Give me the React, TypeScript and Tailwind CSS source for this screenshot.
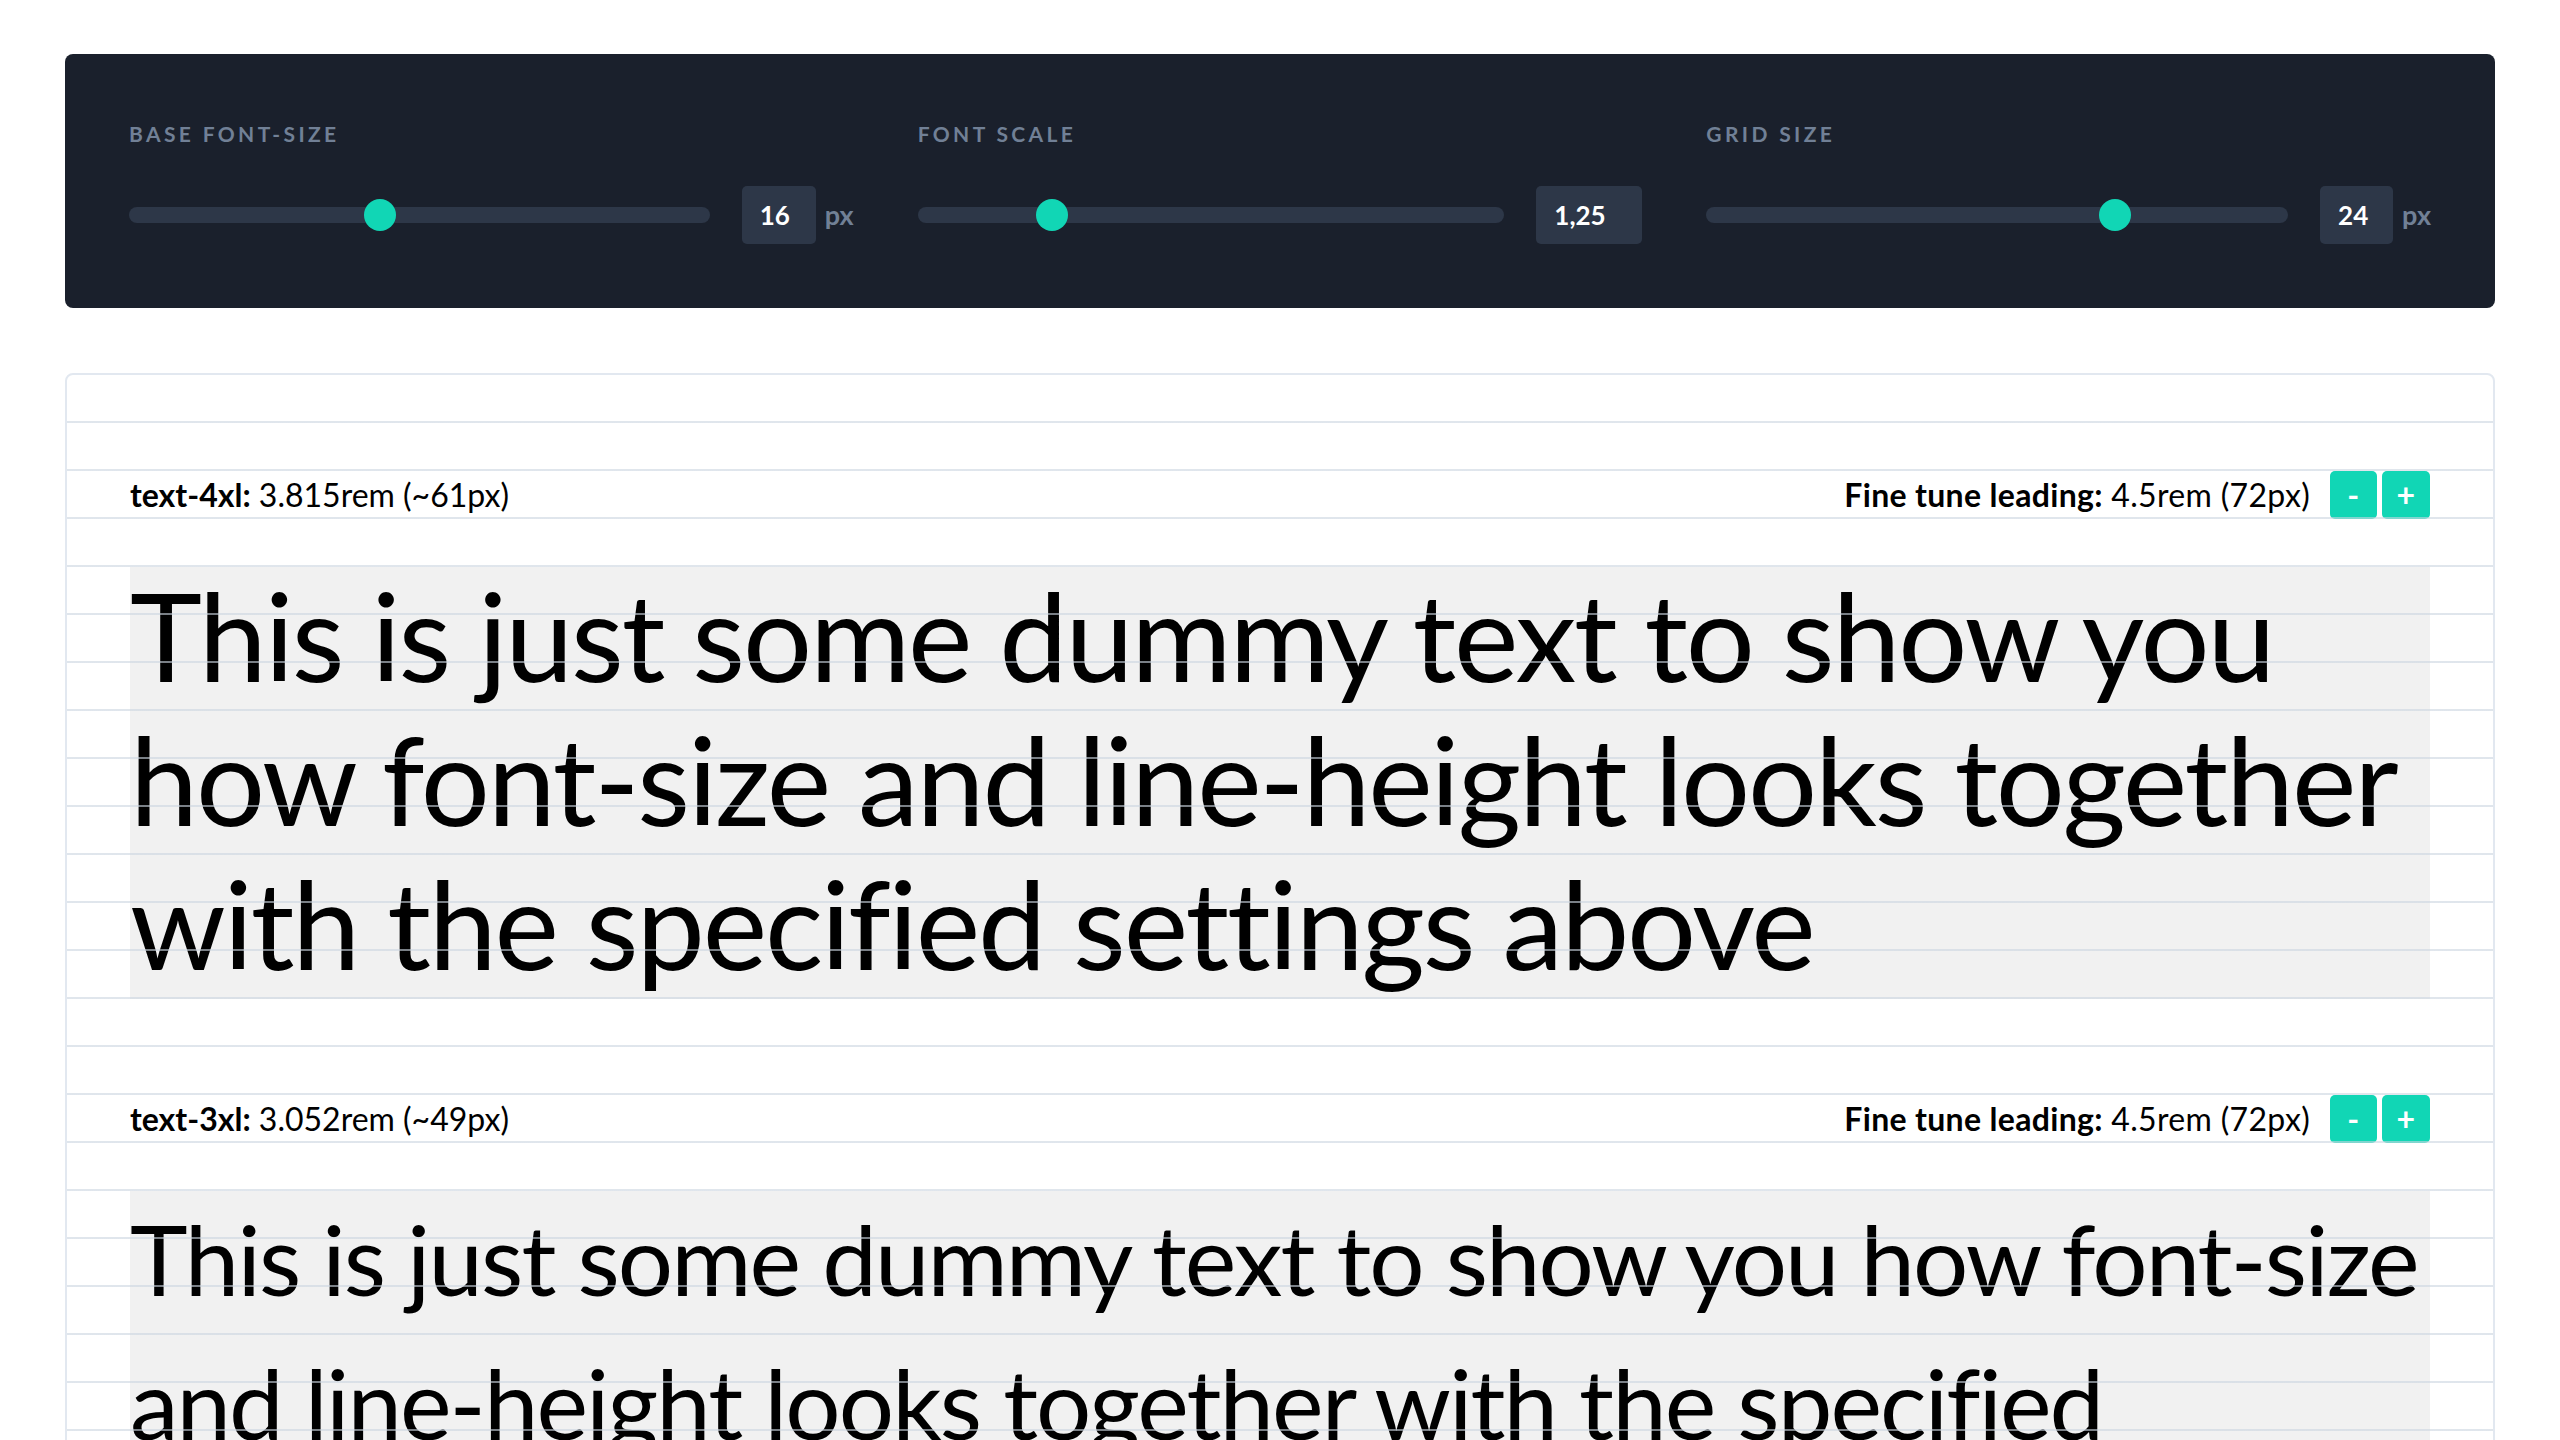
import React from "react";

const controls = [
  { label: "BASE FONT-SIZE", value: "16", unit: "px", pct: 0.428, boxW: "w-[74px]" },
  { label: "FONT SCALE", value: "1,25", unit: null, pct: 0.213, boxW: "w-[106px]" },
  { label: "GRID SIZE", value: "24", unit: "px", pct: 0.715, boxW: "w-[73px]" },
];

const TEXT =
  "This is just some dummy text to show you how font-size and line-height looks together with the specified settings above";

function Control({ c }: { c: (typeof controls)[number] }) {
  return (
    <div className="flex flex-col">
      <div className="text-[21px] leading-[32px] font-bold tracking-[0.16em] text-[#718096]">{c.label}</div>
      <div className="mt-[36px] flex items-center">
        <div className="relative h-4 flex-1 rounded-full bg-[#2d3748]">
          <div
            className="absolute top-[-8px] h-8 w-8 rounded-full bg-[#11d6b5]"
            style={{ left: `calc(${c.pct * 100}% - ${c.pct * 32}px)` }}
          />
        </div>
        <div
          className={`ml-8 flex h-[58px] items-center rounded-[5px] bg-[#2d3748] pl-[18px] text-[26px] font-bold text-white ${c.boxW}`}
        >
          {c.value}
        </div>
        {c.unit && <div className="ml-[9px] text-[27px] font-bold text-[#718096]">{c.unit}</div>}
      </div>
    </div>
  );
}

function Section({
  name,
  rem,
  px,
  size,
}: {
  name: string;
  rem: string;
  px: string;
  size: string;
}) {
  return (
    <div className="pt-24">
      <div className="flex h-12 items-center justify-between text-[32px] text-black">
        <div>
          <span className="font-bold">{name}:</span> {rem} ({px})
        </div>
        <div className="flex items-center tracking-[0.01em]">
          <span className="font-bold">Fine tune leading:</span>
          <span>&nbsp;4.5rem (72px)</span>
          <div className="ml-5 flex gap-[5px]">
            <button className="flex h-12 w-[47px] items-center justify-center rounded-[5px] bg-[#11d6b5] text-[32px] font-bold text-white">
              -
            </button>
            <button className="flex h-12 w-12 items-center justify-center rounded-[5px] bg-[#11d6b5] text-[32px] font-bold text-white">
              +
            </button>
          </div>
        </div>
      </div>
      <div className={`mt-12 bg-[#f1f1f1] leading-[144px] text-black ${size}`}>
        <div className="-translate-y-[4px]">{TEXT}</div>
      </div>
    </div>
  );
}

export default function App() {
  return (
    <div className="min-h-screen bg-white px-[65px] pt-[54px] pb-24 font-['Lato',sans-serif]">
      <div className="grid grid-cols-3 gap-16 rounded-lg bg-[#1a202c] p-16">
        {controls.map((c) => (
          <Control key={c.label} c={c} />
        ))}
      </div>
      <div className="relative mt-[65px] overflow-hidden rounded-lg border-2 border-[#e2e8f0] px-[63px] pb-24">
        <Section name="text-4xl" rem="3.815rem" px="~61px" size="text-[122px] tracking-[-0.018em]" />
        <Section name="text-3xl" rem="3.052rem" px="~49px" size="text-[97.65px] tracking-[-0.02em]" />
        <div className="pointer-events-none absolute inset-0 bg-[repeating-linear-gradient(to_bottom,transparent_0px,transparent_46px,rgba(203,213,224,0.6)_46px,rgba(203,213,224,0.6)_48px)]" />
      </div>
    </div>
  );
}
